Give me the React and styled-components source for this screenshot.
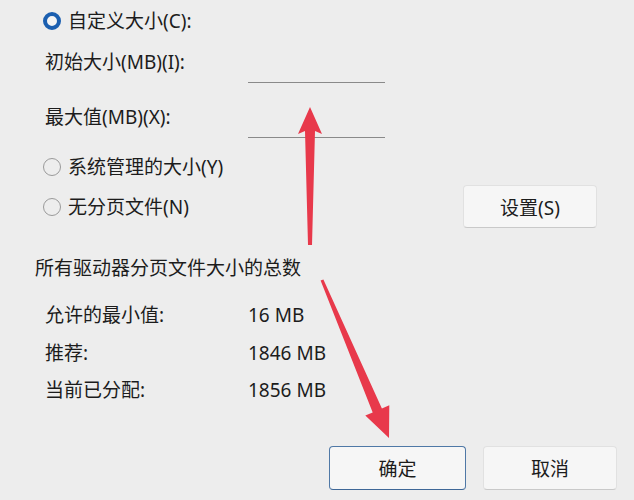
import React from 'react';
import styled, { createGlobalStyle } from 'styled-components';

const GlobalStyle = createGlobalStyle`
	body {
		margin: 0;
		background: #ededed;
		font-family: 'Noto Sans', 'Noto Sans CJK SC', sans-serif;
		color: #1c1c1c;
	}
`;

const Page = styled.div`
	position: relative;
	width: 634px;
	height: 500px;
	box-sizing: border-box;
	padding-top: 8px;
	background: #ededed;
	overflow: hidden;
	font-size: 19px;
`;

const RadioRow = styled.label`
	display: flex;
	align-items: center;
	gap: 7px;
	height: 26px;
	line-height: 26px;
	padding-left: 43px;
	margin-top: ${p => p.$top || 0}px;
`;

const RadioDot = styled.span`
	box-sizing: border-box;
	width: 18px;
	height: 18px;
	border-radius: 50%;
	border: ${p => (p.$checked ? '4px solid #1b5fb0' : '1px solid #9a9a9a')};
	background: ${p => (p.$checked ? '#f4f4f4' : 'transparent')};
	flex-shrink: 0;
`;

const Field = styled.div`
	display: grid;
	grid-template-columns: 203px 137px;
	padding-left: 45px;
	height: 33px;
	margin-top: ${p => p.$top || 0}px;
`;

const FieldLabel = styled.span`
	line-height: 24px;
`;

const LineInput = styled.div`
	box-sizing: border-box;
	height: 33px;
	border-bottom: 1.5px solid #8a8a8a;
`;

const SplitRow = styled.div`
	display: flex;
	align-items: center;
	justify-content: space-between;
	height: 43px;
	margin-top: 5px;
	padding-right: 37px;

	${RadioRow} {
		margin-top: 0;
	}
`;

const Button = styled.button`
	box-sizing: border-box;
	width: ${p => p.$w || 134}px;
	height: ${p => p.$h || 43}px;
	font-family: inherit;
	font-size: 19px;
	color: #1c1c1c;
	background: #f6f6f6;
	border: 1px solid ${p => (p.$primary ? '#4f78a6' : '#e1e1e1')};
	border-bottom-color: ${p => (p.$primary ? '#3e6797' : '#c9c9c9')};
	border-width: ${p => (p.$primary ? '1.5px' : '1px')};
	border-radius: 4px;
	padding: 0;
`;

const Heading = styled.div`
	line-height: 26px;
	padding-left: 35px;
	margin-top: 27px;
`;

const InfoGrid = styled.div`
	display: grid;
	grid-template-columns: 203px auto;
	grid-auto-rows: 26px;
	row-gap: 11.5px;
	padding-left: 45px;
	margin-top: 21px;
	line-height: 26px;
`;

const Footer = styled.div`
	display: flex;
	justify-content: flex-end;
	gap: 17px;
	padding-right: 17px;
	margin-top: 43px;
`;

const Overlay = styled.svg`
	position: absolute;
	left: 0;
	top: 0;
	pointer-events: none;
`;

const info = [
	['允许的最小值:', '16 MB'],
	['推荐:', '1846 MB'],
	['当前已分配:', '1856 MB']
];

export default function App() {
	return (
		<Page>
			<GlobalStyle />
			<RadioRow>
				<RadioDot $checked />
				自定义大小(C):
			</RadioRow>
			<Field $top={16}>
				<FieldLabel>初始大小(MB)(I):</FieldLabel>
				<LineInput />
			</Field>
			<Field $top={22}>
				<FieldLabel>最大值(MB)(X):</FieldLabel>
				<LineInput />
			</Field>
			<RadioRow $top={16}>
				<RadioDot />
				系统管理的大小(Y)
			</RadioRow>
			<SplitRow>
				<RadioRow>
					<RadioDot />
					无分页文件(N)
				</RadioRow>
				<Button>设置(S)</Button>
			</SplitRow>
			<Heading>所有驱动器分页文件大小的总数</Heading>
			<InfoGrid>
				{info.map(([k, v]) => (
					<React.Fragment key={k}>
						<span>{k}</span>
						<span>{v}</span>
					</React.Fragment>
				))}
			</InfoGrid>
			<Footer>
				<Button $primary $w={137} $h={44}>
					确定
				</Button>
				<Button $h={44}>取消</Button>
			</Footer>

			{/* red pointer arrows */}
			<Overlay width="634" height="500" viewBox="0 0 634 500">
				<polygon
					fill="#e8394b"
					points="310,107 322,134 315,131 312,245 308,245 305,131 298,134"
				/>
				<polygon
					fill="#e8394b"
					points="320.6,280.6 323.4,279.4 381.9,408.5 389.3,405.3 389,438 365.3,415.5 372.7,412.4"
				/>
			</Overlay>
		</Page>
	);
}
